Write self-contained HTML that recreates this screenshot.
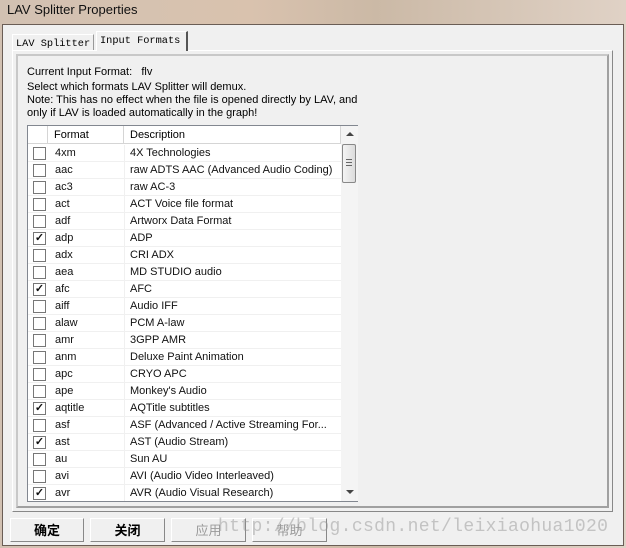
<!DOCTYPE html>
<html><head><meta charset="utf-8"><style>
*{margin:0;padding:0;box-sizing:border-box}
body{width:626px;height:548px;overflow:hidden;background:linear-gradient(90deg,#d2c1b2,#d9c2ae 40%,#cbb9a6 60%,#e0d2c6);font-family:"Liberation Sans",sans-serif;position:relative}
.title{position:absolute;left:7px;top:2px;font-size:13px;color:#111}
.win{position:absolute;left:2px;top:24px;width:622px;height:522px;background:#f0f0f0;border:1px solid #6a5d55}
.tab{position:absolute;font-family:"Liberation Mono",monospace;font-size:10.3px;color:#000;padding:3px 3px 0;white-space:nowrap}
.panel{position:absolute;left:12px;top:50px;width:601px;height:462px;border:1px solid #fff;border-right-color:#888;border-bottom-color:#888;background:#f0f0f0}
.inner{position:absolute;left:3px;top:3px;right:3px;bottom:3px;border:2px solid #c8c8c8;border-right-color:#a0a0a0;border-bottom-color:#a0a0a0}
.txt{position:absolute;left:27px;font-size:11px;color:#000;line-height:13px}
.list{position:absolute;left:27px;top:125px;width:331px;height:377px;border:1px solid #828790;border-right:none;background:#fff;overflow:hidden}
.hdr{position:absolute;left:0;top:0;width:313px;height:18px;border-bottom:1px solid #d5d5d5;font-size:11px}
.hdr div{position:absolute;top:0;height:18px;border-right:1px solid #d5d5d5;padding:3px 0 0 6px}
.row{position:absolute;left:0;width:313px;height:17px;border-bottom:1px solid #f0f0f0;font-size:11px;color:#111}
.row .cb{position:absolute;left:5px;top:2px;width:13px;height:13px;border:1px solid #777;background:#fff;font-size:11px;line-height:11px;text-align:center;font-weight:bold}
.row .f{position:absolute;left:27px;top:2px}
.row .d{position:absolute;left:102px;top:2px;white-space:nowrap}
.row .c1{position:absolute;left:96px;top:0;height:17px;border-left:1px solid #f0f0f0}
.sb{position:absolute;left:313px;top:0;width:17px;height:377px;background:#f4f4f4}
.btn{position:absolute;top:518px;height:24px;border:1px solid #fff;border-right-color:#888;border-bottom-color:#888;background:#f0f0f0;font-family:"Noto Sans CJK SC",sans-serif;font-size:13px;font-weight:bold;text-align:center;line-height:22px}
.wm{position:absolute;left:218px;top:517px;font-family:"Liberation Mono",monospace;font-size:18px;letter-spacing:0.35px;color:rgba(150,150,150,.5);white-space:nowrap}
</style></head><body>
<div class="title">LAV Splitter Properties</div>
<div class="win"></div>
<div class="tab" style="left:12px;top:34px;height:17px;border:1px solid #fff;border-bottom:none;border-right-color:#999">LAV Splitter</div>
<div class="tab" style="left:96px;top:31px;height:20px;width:92px;border:1px solid #fff;border-right:2px solid #555;border-bottom:none;background:#f0f0f0;z-index:2">Input Formats</div>
<div class="panel"><div class="inner"></div></div>
<div class="txt" style="top:66px">Current Input Format:&nbsp;&nbsp;&nbsp;flv</div>
<div class="txt" style="top:81px">Select which formats LAV Splitter will demux.</div>
<div class="txt" style="top:94px">Note: This has no effect when the file is opened directly by LAV, and</div>
<div class="txt" style="top:107px">only if LAV is loaded automatically in the graph!</div>
<div class="list">
<div class="hdr"><div style="left:0;width:20px"></div><div style="left:20px;width:76px">Format</div><div style="left:96px;width:217px">Description</div></div>
<div id="rows"></div>
<div class="sb">
<div style="position:absolute;left:5px;top:6px;width:0;height:0;border-left:4px solid transparent;border-right:4px solid transparent;border-bottom:4px solid #444"></div>
<div style="position:absolute;left:1px;top:18px;width:14px;height:39px;border:1px solid #888;border-radius:2px;background:linear-gradient(90deg,#f4f4f4,#dcdcdc)"><div style="position:absolute;left:3px;top:14px;width:6px;height:7px;border-top:1px solid #666;border-bottom:1px solid #666"></div><div style="position:absolute;left:3px;top:17px;width:6px;border-top:1px solid #666"></div></div>
<div style="position:absolute;left:5px;top:364px;width:0;height:0;border-left:4px solid transparent;border-right:4px solid transparent;border-top:4px solid #444"></div>
</div>
</div>
<div class="btn" style="left:10px;width:74px">确定</div>
<div class="btn" style="left:90px;width:75px">关闭</div>
<div class="btn" style="left:171px;width:75px;color:#9a9a9a;font-weight:normal">应用</div>
<div class="btn" style="left:252px;width:75px;color:#9a9a9a;font-weight:normal">帮助</div>
<div class="wm">http://blog.csdn.net/leixiaohua1020</div>
<script>
var d=[["4xm","4X Technologies"],["aac","raw ADTS AAC (Advanced Audio Coding)"],["ac3","raw AC-3"],["act","ACT Voice file format"],["adf","Artworx Data Format"],["adp","ADP",1],["adx","CRI ADX"],["aea","MD STUDIO audio"],["afc","AFC",1],["aiff","Audio IFF"],["alaw","PCM A-law"],["amr","3GPP AMR"],["anm","Deluxe Paint Animation"],["apc","CRYO APC"],["ape","Monkey's Audio"],["aqtitle","AQTitle subtitles",1],["asf","ASF (Advanced / Active Streaming For..."],["ast","AST (Audio Stream)",1],["au","Sun AU"],["avi","AVI (Audio Video Interleaved)"],["avr","AVR (Audio Visual Research)",1]];
var h="";d.forEach(function(r,i){h+='<div class="row" style="top:'+(19+i*17)+'px"><div class="cb">'+(r[2]?'✓':'')+'</div><div class="f">'+r[0]+'</div><div class="c1"></div><div class="d">'+r[1]+'</div></div>'});
document.getElementById("rows").innerHTML=h;
</script>
</body></html>
